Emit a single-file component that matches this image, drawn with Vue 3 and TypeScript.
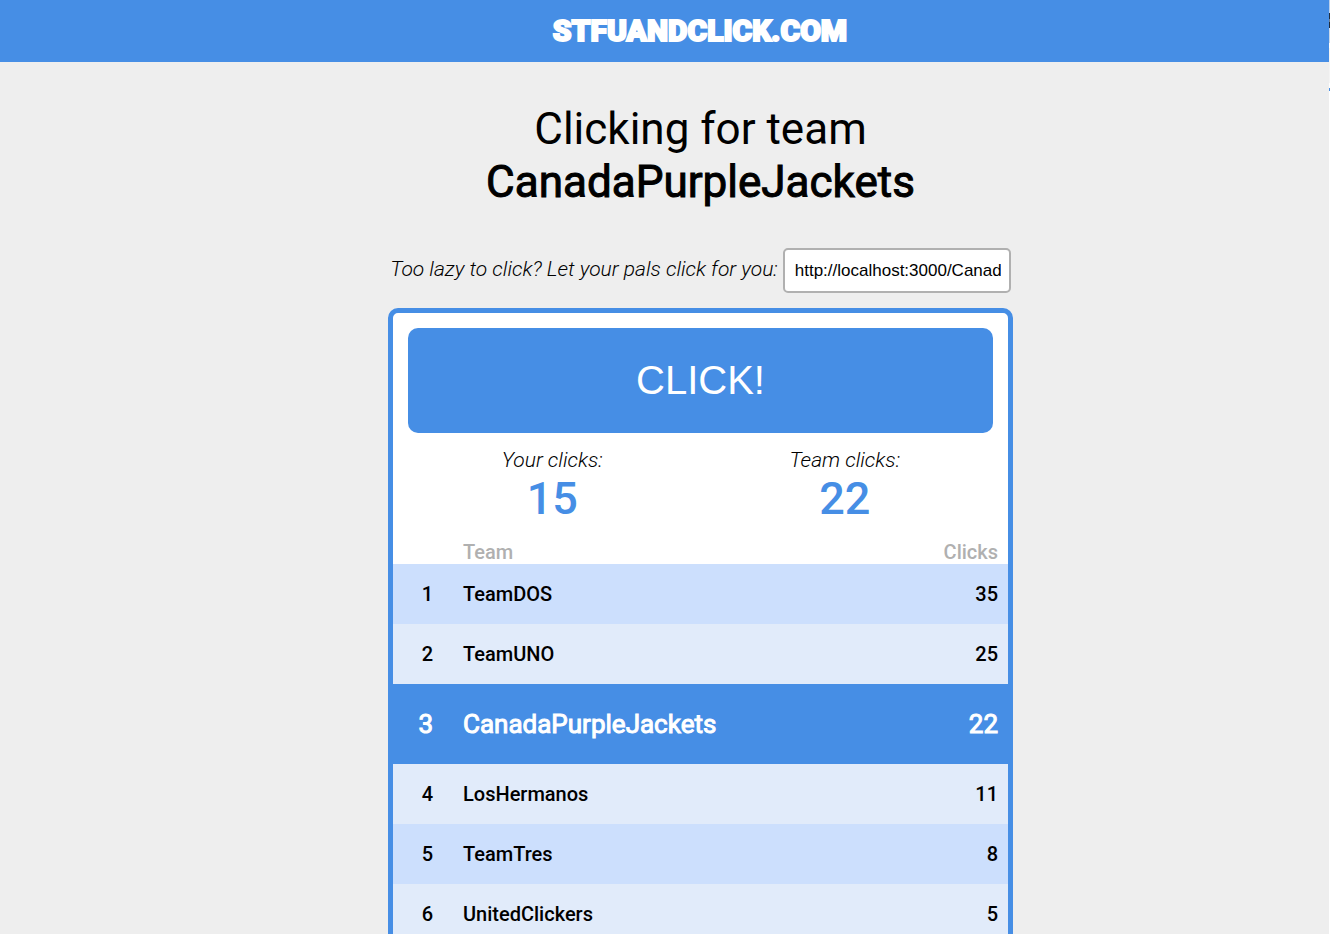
<script setup lang="ts">
import { computed, ref } from 'vue'

interface Team {
  name: string
  clicks: number
}

const currentTeam = 'CanadaPurpleJackets'
const shareUrl = `http://localhost:3000/${currentTeam}`
const yourClicks = ref(15)
const teams = ref<Team[]>([
  { name: 'TeamDOS', clicks: 35 },
  { name: 'TeamUNO', clicks: 25 },
  { name: currentTeam, clicks: 22 },
  { name: 'LosHermanos', clicks: 11 },
  { name: 'TeamTres', clicks: 8 },
  { name: 'UnitedClickers', clicks: 5 },
])

const ranking = computed(() => [...teams.value].sort((a, b) => b.clicks - a.clicks))
const teamClicks = computed(() => teams.value.find((t) => t.name === currentTeam)?.clicks ?? 0)

function click() {
  yourClicks.value++
  const team = teams.value.find((t) => t.name === currentTeam)
  if (team) team.clicks++
}
</script>

<template>
  <div class="page">
    <header class="topbar">
      <a class="brand" href="/">STFUANDCLICK.COM</a>
    </header>
    <main class="content">
      <h1 class="title">Clicking for team <strong>{{ currentTeam }}</strong></h1>
      <div class="share">
        <label for="share-url">Too lazy to click? Let your pals click for you:</label>
        <input id="share-url" type="text" readonly :value="shareUrl" />
      </div>
      <section class="card">
        <button class="click" type="button" @click="click">CLICK!</button>
        <dl class="stats">
          <div class="stat">
            <dt>Your clicks:</dt>
            <dd>{{ yourClicks }}</dd>
          </div>
          <div class="stat">
            <dt>Team clicks:</dt>
            <dd>{{ teamClicks }}</dd>
          </div>
        </dl>
        <table class="ranking">
          <thead>
            <tr>
              <th class="rank"></th>
              <th class="team" scope="col">Team</th>
              <th class="clicks" scope="col">Clicks</th>
            </tr>
          </thead>
          <tbody>
            <tr v-for="(team, i) in ranking" :key="team.name" :class="{ current: team.name === currentTeam }">
              <td class="rank">{{ i + 1 }}</td>
              <td class="team">{{ team.name }}</td>
              <td class="clicks">{{ team.clicks }}</td>
            </tr>
          </tbody>
        </table>
      </section>
    </main>
  </div>
</template>

<style>
body {
  margin: 0;
  background: #eee;
}
</style>

<style scoped>
.page {
  position: relative;
  height: 100vh;
  overflow: hidden;
  color: #000;
  font: 400 20px/24px Roboto, "Liberation Sans", sans-serif;
}
/* sliver of the neighbouring pane along the right edge */
.page::after {
  content: "";
  position: absolute;
  inset: 0 0 0 auto;
  width: 1px;
  background: linear-gradient(
    #b9cfec 13px, #1f2d40 13px 19px, #6d7c8f 19px 22px, #1f2d40 22px 28px,
    #c9d8ea 28px 43px, #fff 43px 48px, #f4f4f4 48px 83px, #fff 83px 88px,
    #468ee5 88px 91px, #fff 91px
  );
}
.topbar {
  display: flex;
  justify-content: center;
  padding: 11px 0 11px 70px;
  background: #468ee5;
}
.brand {
  color: #fff;
  font: 900 30px/40px Roboto, sans-serif;
  -webkit-text-stroke: 2px #fff;
  text-decoration: none;
}
.content {
  display: flex;
  flex-direction: column;
  align-items: center;
  padding: 41px 0 0 71px;
}
.title {
  max-width: 625px;
  margin: 0 0 39px;
  font-size: 44px;
  font-weight: 400;
  line-height: 53px;
  text-align: center;
}
.title strong {
  display: block;
  font-weight: 400;
  -webkit-text-stroke: 1px currentColor;
}
.share {
  display: flex;
  align-items: baseline;
  gap: 5px;
  margin-bottom: 15px;
}
.share label,
.stat dt {
  font-size: 21px;
  font-style: italic;
  font-weight: 300;
}
.share input {
  box-sizing: border-box;
  width: 228px;
  height: 45px;
  padding: 0 8px 0 10px;
  border: 2px solid #b0b0b0;
  border-radius: 5px;
  background: #fff;
  color: #000;
  font: 17px "Liberation Sans", Arial, sans-serif;
}
.card {
  box-sizing: border-box;
  width: 100%;
  max-width: 625px;
  border: 5px solid #468ee5;
  border-radius: 10px;
  background: #fff;
}
.click {
  display: block;
  width: calc(100% - 30px);
  height: 105px;
  margin: 15px;
  border: 0;
  border-radius: 10px;
  background: #468ee5;
  color: #fff;
  font: 40px "Liberation Sans", Arial, sans-serif;
}
.stats {
  display: flex;
  margin: 0 17px 15px 13px;
}
.stat {
  flex: 1;
  text-align: center;
}
.stat dd {
  margin: 0;
  color: #468ee5;
  font-size: 45px;
  font-weight: 500;
  line-height: 53px;
}
.ranking {
  width: 100%;
  border-collapse: collapse;
  font-weight: 500;
}
.ranking th {
  padding: 0;
  color: #b0b0b0;
  font-weight: 500;
}
.ranking td {
  height: 60px;
  padding: 0;
}
.ranking tr > .rank {
  width: 40px;
  text-align: right;
}
.ranking tr > .team {
  padding-left: 30px;
  text-align: left;
}
.ranking tr > .clicks {
  padding-right: 10px;
  text-align: right;
}
.ranking tbody tr:nth-child(odd) {
  background: #ccdffd;
}
.ranking tbody tr:nth-child(even) {
  background: #e1ebfa;
}
.ranking tbody tr.current {
  background: #468ee5;
  color: #fff;
  font-size: 26px;
  font-weight: 400;
  -webkit-text-stroke: 1px currentColor;
}
.ranking tr.current td {
  height: 80px;
}
</style>
